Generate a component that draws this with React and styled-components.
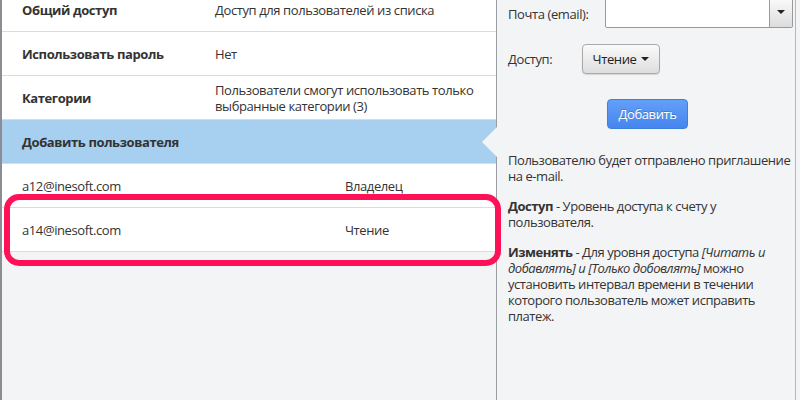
import React from 'react';
import styled, { createGlobalStyle } from 'styled-components';

const GlobalStyle = createGlobalStyle`
  html, body {
    margin: 0;
    padding: 0;
    background: #f3f4f6;
    font-family: 'Open Sans', 'Noto Sans', sans-serif;
    font-size: 13px;
    letter-spacing: -0.4px;
    color: #333;
    overflow: hidden;
  }
`;

const Page = styled.div`
  position: relative;
  width: 800px;
  height: 400px;
  display: flex;
  overflow: hidden;
  background: #f3f4f6;
`;

const LeftPanel = styled.div`
  width: 494px;
  border-left: 2px solid #8a8d92;
  display: flex;
  flex-direction: column;
  margin-top: -12px;
`;

const Row = styled.div`
  position: relative;
  display: flex;
  align-items: center;
  height: ${(p) => p.h || 44}px;
  box-sizing: border-box;
  background: ${(p) => (p.active ? '#a6cff0' : '#fff')};
  border-bottom: 1px solid #dcdcdc;
  padding-left: 20px;
  line-height: 16px;
`;

const Label = styled.div`
  width: 193px;
  font-weight: bold;
`;

const Value = styled.div`
  width: 270px;
`;

const Email = styled.div`
  width: 323px;
`;

const Arrow = styled.div`
  position: absolute;
  right: -1px;
  top: 50%;
  margin-top: -15px;
  width: 0;
  height: 0;
  border-top: 15px solid transparent;
  border-bottom: 15px solid transparent;
  border-right: 15px solid #f3f4f6;
`;

const RightPanel = styled.div`
  width: 300px;
  border-left: 1px solid #9a9da2;
  border-right: 1px solid #b5b8bc;
  box-sizing: border-box;
  padding: 0 2px 0 11px;
  display: flex;
  flex-direction: column;
`;

const FormRow = styled.div`
  display: flex;
  align-items: center;
  height: ${(p) => p.h}px;
  margin-top: ${(p) => p.mt || 0}px;
`;

const FormLabel = styled.div`
  width: ${(p) => p.w}px;
  flex-shrink: 0;
`;

const Combo = styled.div`
  display: flex;
  width: 189px;
  height: 31px;
  border: 1px solid #9a9a9a;
  border-radius: 2px;
  background: #fff;
  box-sizing: border-box;
  margin-top: -4px;
`;

const ComboInput = styled.div`
  flex: 1;
`;

const ComboButton = styled.div`
  width: 22px;
  border-left: 1px solid #9a9a9a;
  background: linear-gradient(#fbfbfb, #dcdcdc);
  display: flex;
  align-items: center;
  justify-content: center;
`;

const Caret = styled.span`
  width: 0;
  height: 0;
  border-left: 4px solid transparent;
  border-right: 4px solid transparent;
  border-top: 4px solid #222;
  margin-left: ${(p) => p.ml || 0}px;
`;

const GrayButton = styled.div`
  width: 78px;
  height: 30px;
  box-sizing: border-box;
  border: 1px solid #a9a9a9;
  border-radius: 4px;
  background: linear-gradient(#fafafa, #dedede);
  box-shadow: 0 1px 1px rgba(0, 0, 0, 0.12);
  display: flex;
  align-items: center;
  justify-content: center;
  color: #222;
`;

const BlueButton = styled.div`
  align-self: center;
  width: 81px;
  height: 30px;
  box-sizing: border-box;
  border: 1px solid #3f7fe0;
  border-radius: 4px;
  background: linear-gradient(#63a0f8, #4585ee);
  color: #fff;
  text-shadow: 0 -1px 0 rgba(0, 0, 0, 0.2);
  display: flex;
  align-items: center;
  justify-content: center;
  margin-top: 25px;
  margin-left: -6px;
`;

const Help = styled.p`
  margin: ${(p) => p.mt}px 0 0;
  line-height: 16px;
  letter-spacing: -0.45px;
`;

const Highlight = styled.div`
  position: absolute;
  left: 4px;
  top: 194px;
  width: 497px;
  height: 72px;
  box-sizing: border-box;
  border: 6px solid #ff1158;
  border-radius: 15px;
  pointer-events: none;
`;

export default function App() {
  return (
    <>
      <GlobalStyle />
      <Page>
        <LeftPanel>
          <Row>
            <Label>Общий доступ</Label>
            <Value>Доступ для пользователей из списка</Value>
          </Row>
          <Row>
            <Label>Использовать пароль</Label>
            <Value>Нет</Value>
          </Row>
          <Row>
            <Label>Категории</Label>
            <Value>Пользователи смогут использовать только выбранные категории (3)</Value>
          </Row>
          <Row active h={44}>
            <Label>Добавить пользователя</Label>
            <Arrow />
          </Row>
          <Row>
            <Email>a12@inesoft.com</Email>
            <div>Владелец</div>
          </Row>
          <Row>
            <Email>a14@inesoft.com</Email>
            <div>Чтение</div>
          </Row>
        </LeftPanel>
        <RightPanel>
          <FormRow h={28}>
            <FormLabel w={97}>Почта (email):</FormLabel>
            <Combo>
              <ComboInput />
              <ComboButton>
                <Caret />
              </ComboButton>
            </Combo>
          </FormRow>
          <FormRow h={30} mt={16}>
            <FormLabel w={74}>Доступ:</FormLabel>
            <GrayButton>
              Чтение<Caret ml={5} />
            </GrayButton>
          </FormRow>
          <BlueButton>Добавить</BlueButton>
          <Help mt={23}>Пользователю будет отправлено приглашение на e-mail.</Help>
          <Help mt={14}>
            <b>Доступ</b> - Уровень доступа к счету у пользователя.
          </Help>
          <Help mt={14}>
            <b>Изменять</b> - Для уровня доступа <i>[Читать и добавлять] и [Только добовлять]</i> можно
            установить интервал времени в течении которого пользователь может исправить платеж.
          </Help>
        </RightPanel>
        <Highlight />
      </Page>
    </>
  );
}
